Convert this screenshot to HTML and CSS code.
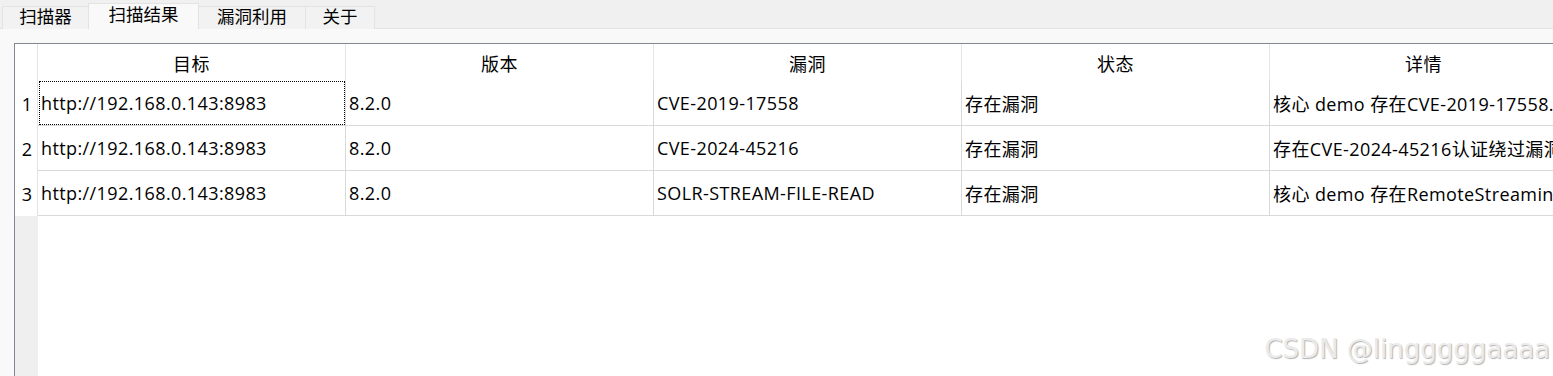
FILE: index.html
```html
<!DOCTYPE html>
<html lang="zh-CN">
<head>
<meta charset="utf-8">
<title>扫描结果</title>
<link rel="stylesheet" href="styles.css">
</head>
<body>
<div class="window">
  <div class="tabbar">
    <div class="tab tab-scan">扫描器</div>
    <div class="tab tab-result active">扫描结果</div>
    <div class="tab tab-exploit">漏洞利用</div>
    <div class="tab tab-about">关于</div>
  </div>
  <div class="panel">
    <div class="frame">
      <div class="row head">
        <div class="corner"></div>
        <div class="hcell">目标</div>
        <div class="hcell">版本</div>
        <div class="hcell">漏洞</div>
        <div class="hcell">状态</div>
        <div class="hcell">详情</div>
      </div>
      <div class="row">
        <div class="rh">1</div>
        <div class="cell focus">http://192.168.0.143:8983</div>
        <div class="cell">8.2.0</div>
        <div class="cell">CVE-2019-17558</div>
        <div class="cell">存在漏洞</div>
        <div class="cell">核心 demo 存在CVE-2019-17558...</div>
      </div>
      <div class="row">
        <div class="rh">2</div>
        <div class="cell">http://192.168.0.143:8983</div>
        <div class="cell">8.2.0</div>
        <div class="cell">CVE-2024-45216</div>
        <div class="cell">存在漏洞</div>
        <div class="cell">存在CVE-2024-45216认证绕过漏洞</div>
      </div>
      <div class="row">
        <div class="rh">3</div>
        <div class="cell">http://192.168.0.143:8983</div>
        <div class="cell">8.2.0</div>
        <div class="cell">SOLR-STREAM-FILE-READ</div>
        <div class="cell">存在漏洞</div>
        <div class="cell">核心 demo 存在RemoteStreamin...</div>
      </div>
      <div class="filler">
        <div class="rh-fill"></div>
      </div>
    </div>
  </div>
  <div class="watermark">CSDN @lingggggaaaa</div>
</div>
</body>
</html>
```
FILE: styles.css
```css
* { box-sizing: border-box; }
html, body { margin: 0; height: 100%; overflow: hidden; }
body {
  background: #f0f0f0;
  font-family: "Open Sans", "Noto Sans CJK SC", sans-serif;
  color: #000;
}
.window {
  position: relative;
  display: flex;
  flex-direction: column;
  height: 100vh;
}
.tabbar {
  flex: none;
  height: 29px;
  display: flex;
  align-items: flex-end;
  padding-left: 2px;
  border-bottom: 1px solid #e3e3e3;
  font-size: 17.5px;
}
.tab {
  height: 23px;
  margin-bottom: -1px;
  padding-bottom: 2px;
  display: flex;
  align-items: center;
  justify-content: center;
  background: #f2f2f2;
  border: 1px solid #e3e3e3;
  border-bottom: none;
  margin-left: -1px;
  line-height: 1;
  white-space: nowrap;
}
.tab:first-child { margin-left: 0; }
.tab-scan { width: 87px; }
.tab-result { width: 111px; }
.tab-exploit { width: 108px; }
.tab-about { width: 70px; }
.tab.active {
  position: relative;
  height: 26px;
  padding-bottom: 4px;
  background: #f9f9f9;
}
.panel {
  flex: 1;
  min-height: 0;
  background: #f9f9f9;
  padding: 14px 0 0 14px;
  display: flex;
}
.frame {
  flex: 1;
  min-width: 0;
  display: flex;
  flex-direction: column;
  background: #fff;
  border-left: 1px solid #828790;
  border-top: 1px solid #828790;
  overflow: hidden;
  font-size: 18px;
  letter-spacing: 0.4px;
}
.row { display: flex; flex: none; }
.head { height: 37px; }
.corner, .rh {
  flex: none;
  width: 23px;
  border-right: 1px solid #e3e3e3;
  background: #fff;
}
.rh {
  height: 45px;
  display: flex;
  align-items: center;
  justify-content: center;
  padding-left: 2px;
}
.hcell {
  flex: none;
  width: 308px;
  border-right: 1px solid #e5e5e5;
  display: flex;
  align-items: center;
  justify-content: center;
  padding-top: 1px;
}
.cell {
  flex: none;
  width: 308px;
  height: 45px;
  border-right: 1px solid #d9d9d9;
  border-bottom: 1px solid #d9d9d9;
  display: flex;
  align-items: center;
  padding-left: 3px;
  white-space: nowrap;
  overflow: hidden;
  position: relative;
}
.cell.focus::after {
  content: "";
  position: absolute;
  top: 0;
  bottom: 0;
  left: 1px;
  right: 0;
  border: 1px dotted #000;
}
.filler { flex: 1; display: flex; }
.rh-fill { width: 23px; background: #efefef; }
.watermark {
  position: absolute;
  right: 3px;
  bottom: 12px;
  font-family: "DejaVu Sans", sans-serif;
  font-size: 26px;
  color: #ebebeb;
  text-shadow: 1px 1px 1px rgba(0, 0, 0, 0.3);
  white-space: nowrap;
}
```
